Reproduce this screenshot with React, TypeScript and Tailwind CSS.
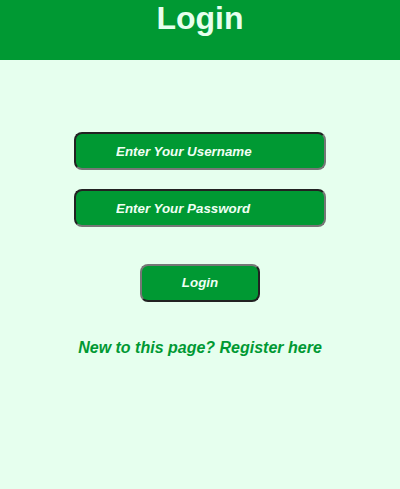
export default function App() {
  return (
    <div className="min-h-[489px] bg-[#e6ffee] font-['Liberation_Sans',Arial,sans-serif]">
      <div className="h-[60px] bg-[#009933] text-center">
        <h1 className="text-[32px] font-bold leading-[36px] text-[#e6ffee]">Login</h1>
      </div>

      <div className="flex flex-col items-center pt-[72px]">
        <input
          type="text"
          placeholder="Enter Your Username"
          className="h-[38px] w-[252px] rounded-[8px] border-2 border-t-[#222] border-l-[#222] border-b-[#767676] border-r-[#767676] bg-[#009933] pl-[40px] text-[13.33px] font-bold italic text-white outline-none placeholder:text-[#f0fff4]"
        />
        <input
          type="password"
          placeholder="Enter Your Password"
          className="mt-[19px] h-[38px] w-[252px] rounded-[8px] border-2 border-t-[#222] border-l-[#222] border-b-[#767676] border-r-[#767676] bg-[#009933] pl-[40px] text-[13.33px] font-bold italic text-white outline-none placeholder:text-[#f0fff4]"
        />
        <button className="mt-[37px] h-[38px] w-[120px] rounded-[8px] border-2 border-t-[#767676] border-l-[#767676] border-b-[#222] border-r-[#222] bg-[#009933] text-[13.33px] font-bold italic text-[#f0fff4]">
          Login
        </button>
        <p className="mt-[34px] text-[16px] font-bold italic text-[#009933]">
          New to this page? Register here
        </p>
      </div>
    </div>
  )
}
